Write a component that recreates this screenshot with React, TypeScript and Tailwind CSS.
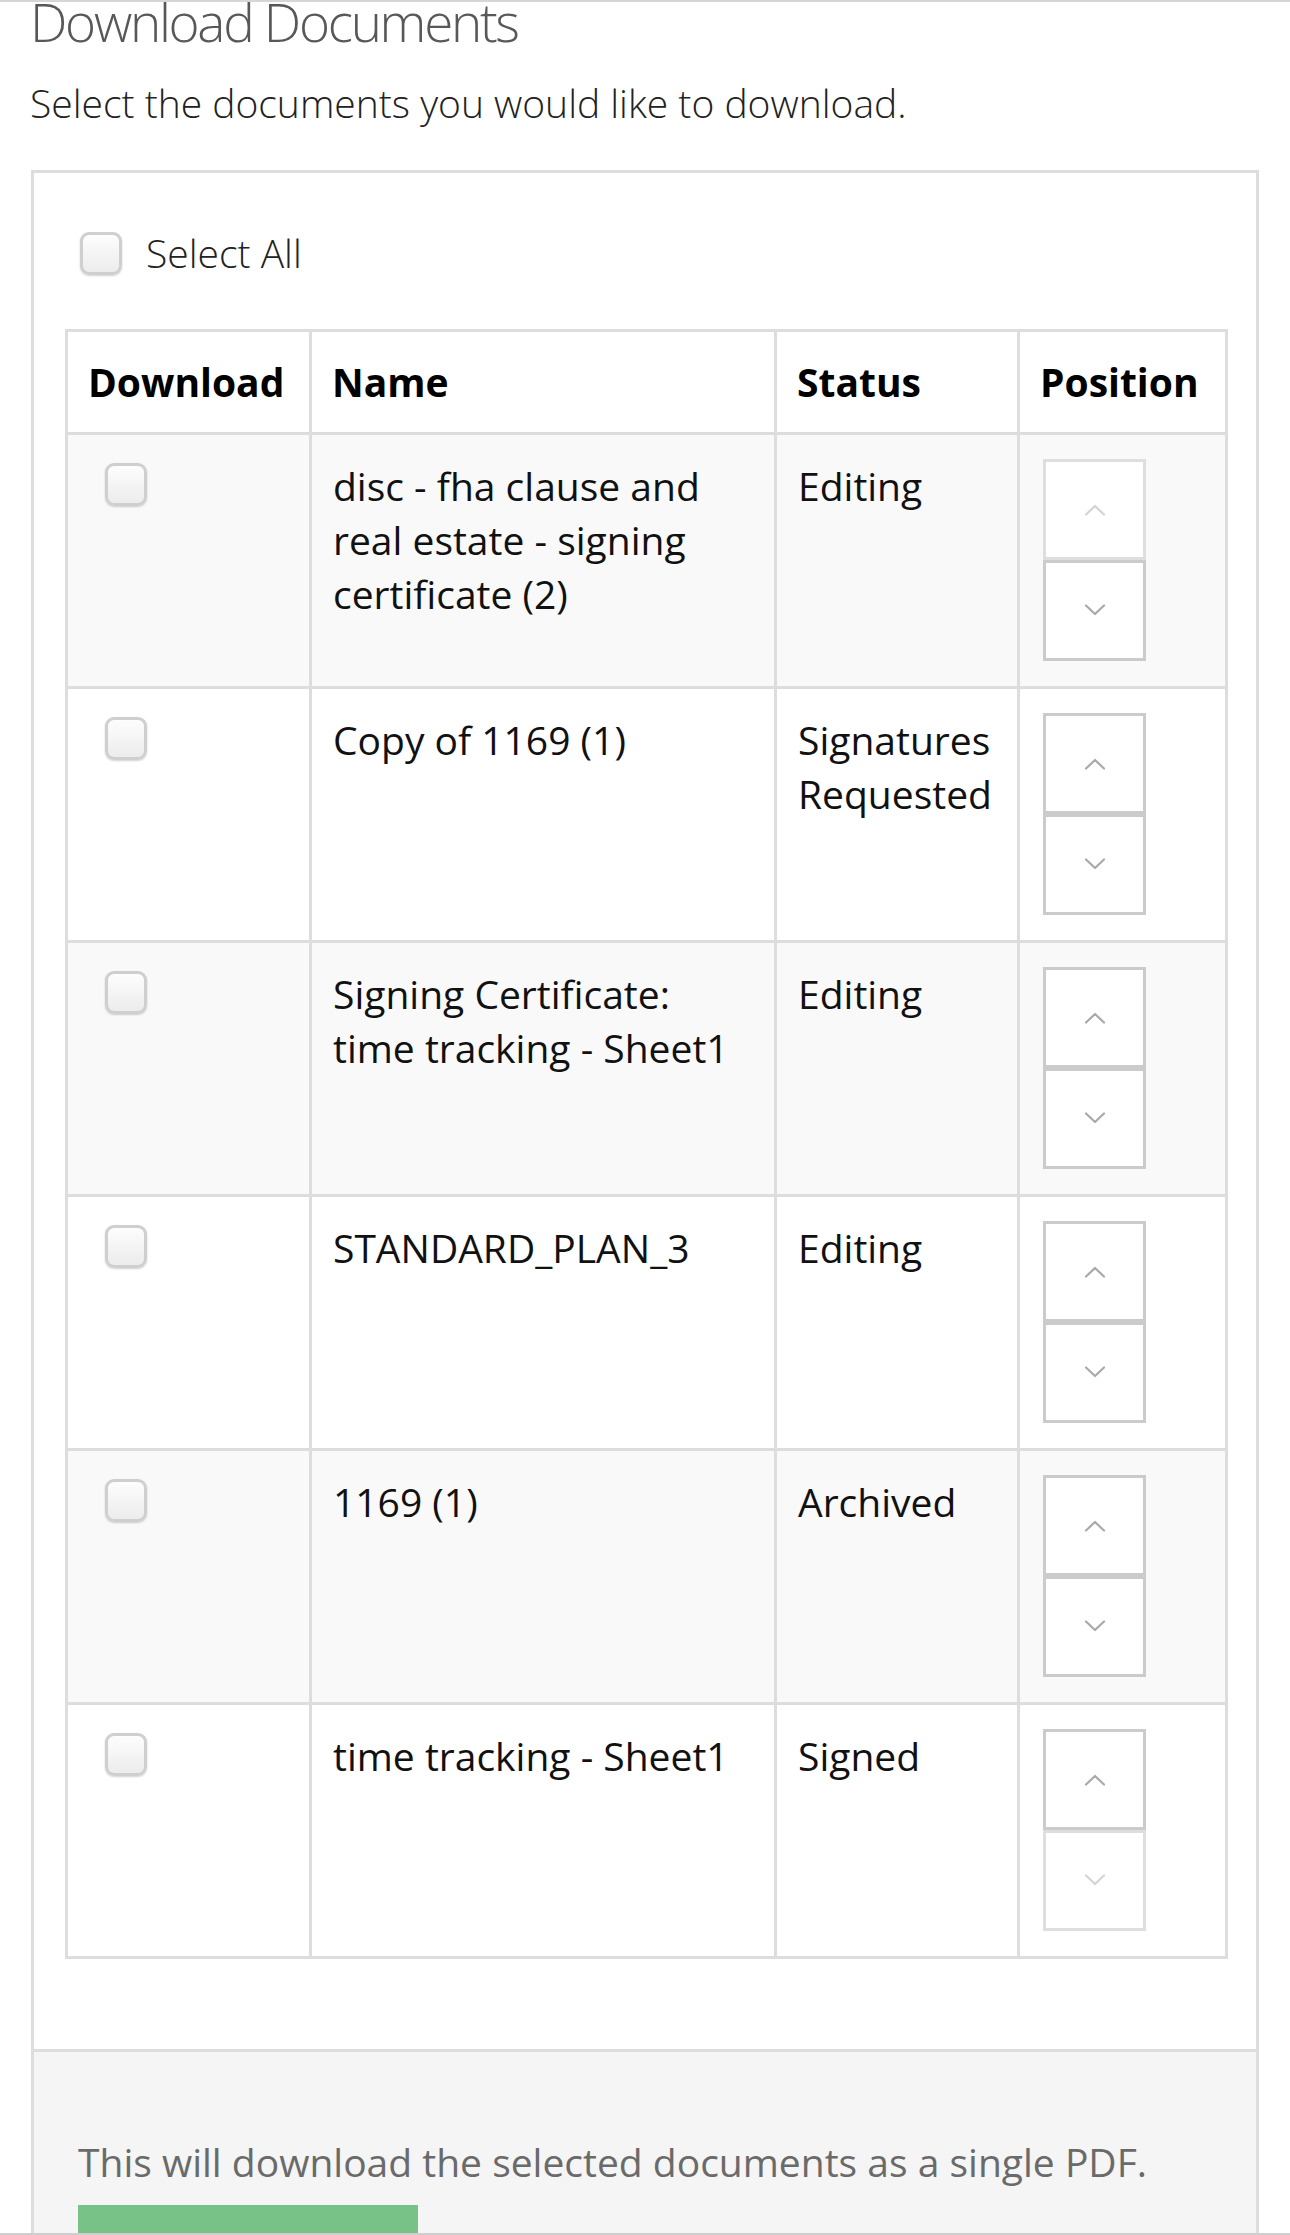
import React from "react";

type Row = {
  name: string;
  status: string;
  upDisabled?: boolean;
  downDisabled?: boolean;
};

const rows: Row[] = [
  { name: "disc - fha clause and real estate - signing certificate (2)", status: "Editing", upDisabled: true },
  { name: "Copy of 1169 (1)", status: "Signatures Requested" },
  { name: "Signing Certificate: time tracking - Sheet1", status: "Editing" },
  { name: "STANDARD_PLAN_3", status: "Editing" },
  { name: "1169 (1)", status: "Archived" },
  { name: "time tracking - Sheet1", status: "Signed", downDisabled: true },
];

function Checkbox() {
  return (
    <span className="block w-[42px] h-[43px] rounded-[9px] border-[3px] border-[#cfcfcf] bg-gradient-to-b from-[#fdfdfd] to-[#ececec] shadow-[0_1px_2px_rgba(0,0,0,0.18)]" />
  );
}

function Chevron({ up, disabled }: { up?: boolean; disabled?: boolean }) {
  return (
    <svg width="22" height="13" viewBox="0 0 22 13" fill="none">
      <polyline
        points={up ? "2,11.5 11,3 20,11.5" : "2,1.5 11,10 20,1.5"}
        stroke={disabled ? "#d4d4d4" : "#a9a9a9"}
        strokeWidth="2.2"
        strokeLinecap="round"
        strokeLinejoin="round"
      />
    </svg>
  );
}

function PosButton({ up, disabled }: { up?: boolean; disabled?: boolean }) {
  return (
    <div
      className={
        disabled
          ? "w-[103px] h-[101px] bg-white border-[3px] border-[#dedede] flex items-center justify-center"
          : "w-[103px] h-[101px] bg-white border-[3px] border-[#cbcbcb] flex items-center justify-center"
      }
    >
      <Chevron up={up} disabled={disabled} />
    </div>
  );
}

export default function App() {
  const font = { fontFamily: '"Open Sans", "Noto Sans", sans-serif' };
  return (
    <div
      className="relative w-[1290px] h-[2235px] overflow-hidden bg-white border-t-2 border-[#d6d6d6]"
      style={font}
    >
      <h1 className="mt-[-10px] pl-[30px] text-[53px] leading-[60px] font-light text-[#585858] tracking-[-2.3px]">
        Download Documents
      </h1>
      <p className="mt-[24px] pl-[30px] text-[39px] leading-[54px] font-light text-[#222]">
        Select the documents you would like to download.
      </p>

      <div className="mt-[40px] ml-[31px] w-[1228px] border-[3px] border-[#dddddd]">
        <div className="pt-[53px] pl-[31px]">
          <label className="flex items-center h-[54px]">
            <span className="ml-[15px]">
              <Checkbox />
            </span>
            <span className="ml-[24px] text-[39px] leading-[54px] font-light text-[#222]">Select All</span>
          </label>

          <div className="mt-[49px] w-[1163px] grid grid-cols-[244px_465px_243px_208px] border-r-[3px] border-b-[3px] border-[#dddddd] text-[39px] leading-[54px] text-[#111]">
            {["Download", "Name", "Status", "Position"].map((h) => (
              <div
                key={h}
                className="border-l-[3px] border-t-[3px] border-[#dddddd] bg-white px-[20px] pt-[23px] pb-[23px] font-bold text-black"
              >
                {h}
              </div>
            ))}
            {rows.map((r, i) => {
              const bg = i % 2 === 0 ? "bg-[#f9f9f9]" : "bg-white";
              return (
                <React.Fragment key={i}>
                  <div className={`border-l-[3px] border-t-[3px] border-[#dddddd] ${bg} px-[21px] pt-[28px]`}>
                    <span className="block ml-[16px]">
                      <Checkbox />
                    </span>
                  </div>
                  <div className={`border-l-[3px] border-t-[3px] border-[#dddddd] ${bg} px-[21px] pt-[24px]`}>
                    {r.name}
                  </div>
                  <div className={`border-l-[3px] border-t-[3px] border-[#dddddd] ${bg} px-[21px] pt-[24px]`}>
                    {r.status}
                  </div>
                  <div className={`border-l-[3px] border-t-[3px] border-[#dddddd] ${bg} px-[23px] pt-[24px] pb-[25px]`}>
                    <PosButton up disabled={r.upDisabled} />
                    <PosButton disabled={r.downDisabled} />
                  </div>
                </React.Fragment>
              );
            })}
          </div>
        </div>

        <div className="mt-[90px] border-t-[3px] border-[#dddddd] bg-[#f5f5f5] pl-[44px] pt-[83px] pb-[40px]">
          <p className="text-[39px] leading-[54px] text-[#6a6a6a]">
            This will download the selected documents as a single PDF.
          </p>
          <div className="mt-[16px] w-[340px] h-[100px] bg-[#79c287] pl-[45px] pt-[28px]">
            <span className="block w-[20px] h-[20px] bg-[#e9f5ea] rounded-[2px]" />
          </div>
        </div>
      </div>

      <div className="absolute left-0 right-0 bottom-0 h-[2px] bg-[#cfcfcf]" />
    </div>
  );
}
